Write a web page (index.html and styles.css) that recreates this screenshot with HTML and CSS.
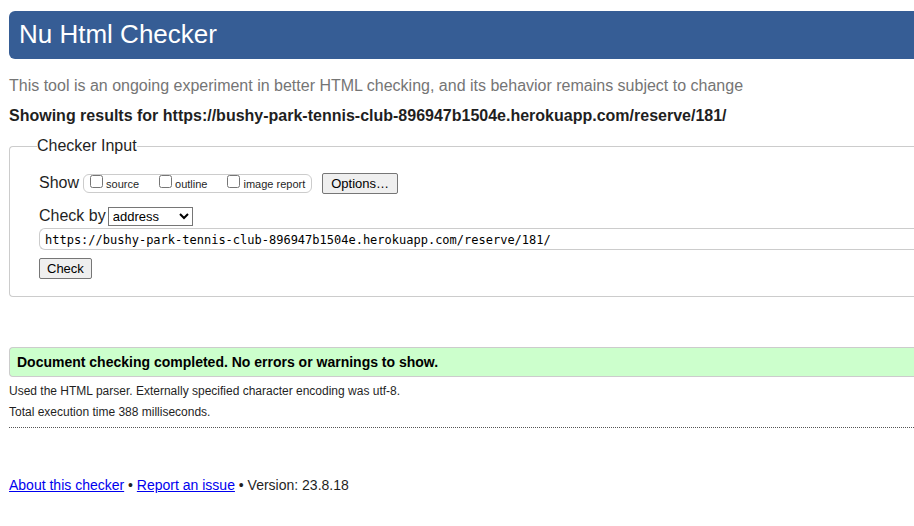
FILE: index.html
```html
<!DOCTYPE html>
<html lang="en">
<head>
<meta charset="utf-8">
<title>Nu Html Checker</title>
<link rel="stylesheet" href="styles.css">
</head>
<body>
<header class="banner"><h1>Nu Html Checker</h1></header>
<main>
<p class="intro">This tool is an ongoing experiment in better HTML checking, and its behavior remains subject to change</p>
<h2 class="heading">Showing results for https://bushy-park-tennis-club-896947b1504e.herokuapp.com/reserve/181/</h2>
<form>
<fieldset class="input-area">
<legend>Checker Input</legend>
<div class="show-row">
<span>Show</span>
<div class="checkboxes">
<label><input type="checkbox">source</label>
<label><input type="checkbox">outline</label>
<label><input type="checkbox">image report</label>
</div>
<button type="button" class="options">Options…</button>
</div>
<div class="check-row">
<label for="mode">Check by</label>
<select id="mode"><option>address</option><option>file upload</option><option>text input</option></select>
</div>
<input class="address" type="url" aria-label="Address" value="https://bushy-park-tennis-club-896947b1504e.herokuapp.com/reserve/181/">
<button type="submit" class="check">Check</button>
</fieldset>
</form>
<p class="success">Document checking completed. No errors or warnings to show.</p>
<p class="details">Used the HTML parser. Externally specified character encoding was utf-8.</p>
<p class="details">Total execution time 388 milliseconds.</p>
</main>
<footer class="about"><a href="#about">About this checker</a> • <a href="#issues">Report an issue</a> • Version: 23.8.18</footer>
</body>
</html>
```
FILE: styles.css
```css
* { box-sizing: border-box; }
body {
  margin: 11px 0 0 9px;
  overflow-x: hidden;
  color: #1f1f1f;
  background: #fff;
  font: 16px/20px "Liberation Sans", Arial, sans-serif;
}
.banner {
  padding: 0 10px 2px;
  border-radius: 6px 0 0 6px;
  background: #365d95;
  color: #fff;
}
h1 { margin: 0; font-size: 26px; font-weight: 400; line-height: 46px; }
.intro { margin: 17px 0 10px; color: #757575; }
.heading { margin: 0 0 10px; font-size: 16px; line-height: 20px; }
.input-area {
  margin: 0;
  min-width: 0;
  padding: 16px 0 17px 29px;
  border: 1px solid #ccc;
  border-right: 0;
  border-radius: 4px 0 0 4px;
}
legend { margin-left: -2px; padding: 0; }
.show-row { display: flex; align-items: center; height: 22px; }
.checkboxes {
  display: flex;
  gap: 20px;
  height: 19px;
  margin: 0 10px 0 4px;
  padding: 0 6px;
  border: 1px solid #ccc;
  border-radius: 6px;
  font-size: 11px;
  line-height: 19px;
}
.checkboxes label { display: flex; align-items: flex-start; gap: 3px; }
.checkboxes input { width: 13px; height: 13px; margin: 0; }
button {
  display: block;
  height: 21px;
  padding: 0 7px;
  border: 1px solid #767676;
  border-radius: 2px;
  background: #efefef;
  color: #000;
  font: 13px/19px "Liberation Sans", Arial, sans-serif;
}
.options { padding: 0 8px; }
.check-row { display: flex; align-items: center; gap: 2px; height: 20px; margin-top: 12px; }
select {
  width: 85px;
  height: 19px;
  padding: 0;
  border: 1px solid #767676;
  border-radius: 0;
  background: #fff;
  color: #000;
  font: 13px/17px "Liberation Sans", Arial, sans-serif;
}
.address {
  display: block;
  width: 100%;
  height: 22px;
  margin: 2px 0 8px;
  padding: 2px 5px 0;
  border: 1px solid #ccc;
  border-right: 0;
  border-radius: 6px 0 0 6px;
  color: #000;
  font: 12px/18px "DejaVu Sans Mono", monospace;
}
.success {
  margin: 50px 0 4px;
  padding: 0 7px;
  border: 1px solid #ccc;
  border-right: 0;
  border-radius: 4px 0 0 4px;
  background: #cfc;
  color: #000;
  font-size: 14px;
  font-weight: 700;
  line-height: 28px;
}
.details { margin: 0; font-size: 12px; line-height: 21px; }
main { padding-bottom: 4px; border-bottom: 1px dotted #555; }
.about { margin-top: 47px; font-size: 14px; }
a { color: #00e; }
```
